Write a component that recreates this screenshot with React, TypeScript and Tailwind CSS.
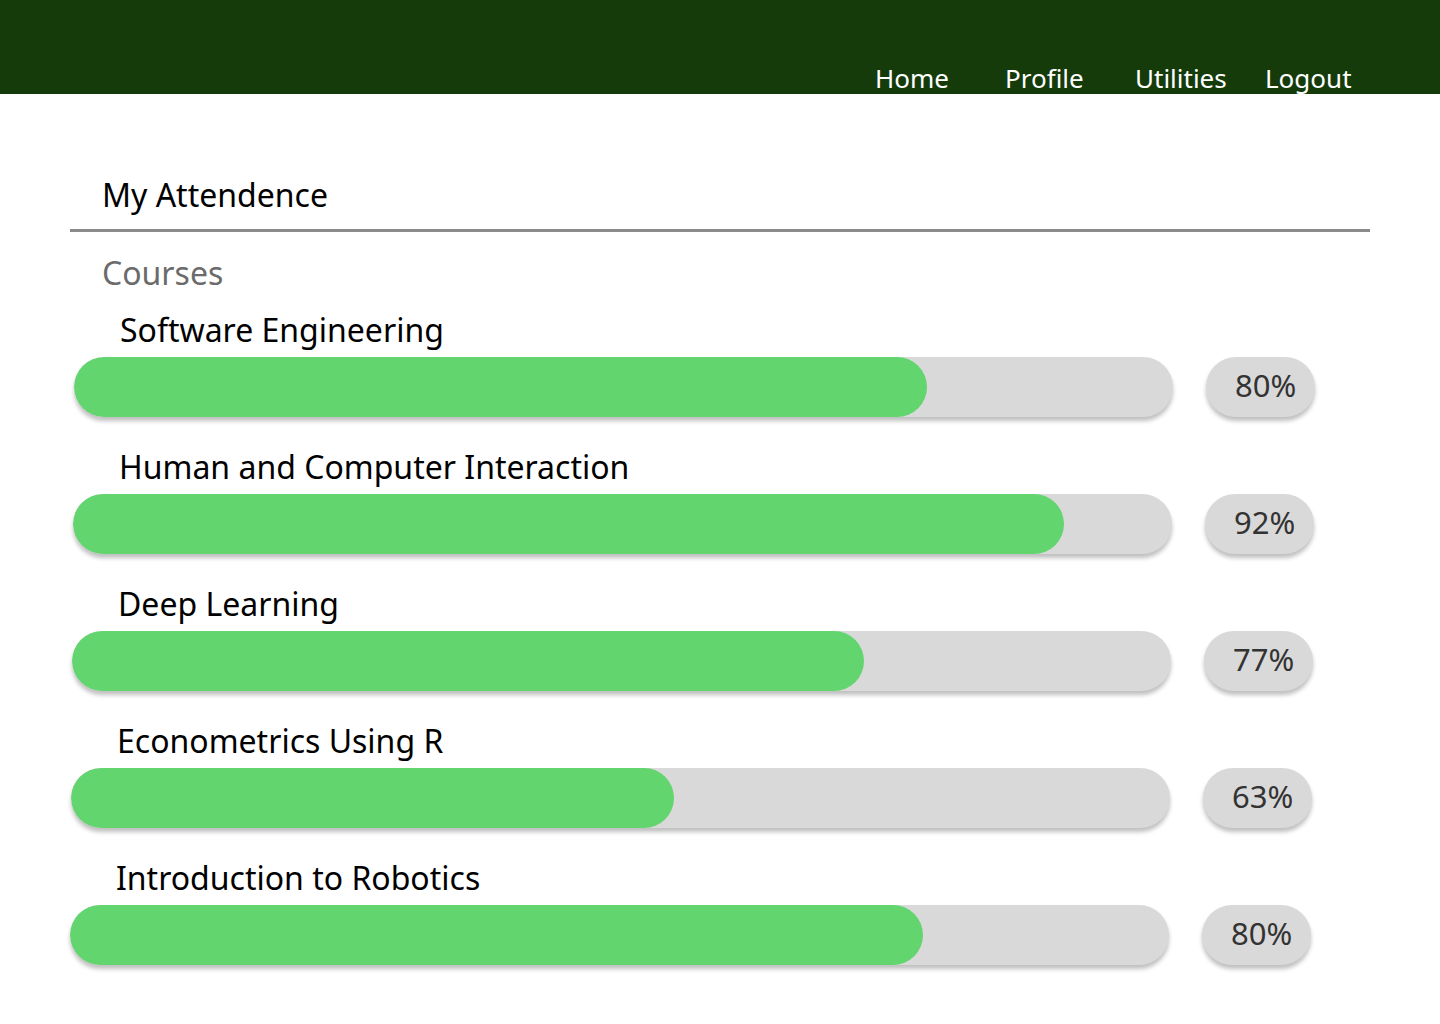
const courses = [
  { name: "Software Engineering", fill: "w-[853px]", pct: "80%", shift: "ml-[4px]" },
  { name: "Human and Computer Interaction", fill: "w-[991px]", pct: "92%", shift: "ml-[3px]" },
  { name: "Deep Learning", fill: "w-[792px]", pct: "77%", shift: "ml-[2px]" },
  { name: "Econometrics Using R", fill: "w-[603px]", pct: "63%", shift: "ml-[1px]" },
  { name: "Introduction to Robotics", fill: "w-[853px]", pct: "80%", shift: "ml-0" },
];

const links = ["Home", "Profile", "Utilities", "Logout"];

export default function App() {
  return (
    <div className="min-h-screen bg-white font-['Noto_Sans',sans-serif] text-black">
      <header className="h-[94px] bg-[#153b0b] flex justify-end pr-[45px] pt-[62px]">
        {links.map((l) => (
          <a key={l} href="#" className="w-[130px] text-[26px] leading-[32px] text-white">
            {l}
          </a>
        ))}
      </header>

      <main className="px-[70px]">
        <div className="mt-[79px] pb-[12px] border-b-[3px] border-[#8a8a8a]">
          <h1 className="pl-[32px] text-[32px] leading-[44px]">My Attendence</h1>
        </div>

        <h2 className="mt-[19px] pl-[32px] text-[32px] leading-[44px] text-[#6b6b6b]">Courses</h2>

        <div className="mt-[13px] flex flex-col gap-[28px]">
          {courses.map((c) => (
            <div key={c.name} className={c.shift}>
              <p className="pl-[46px] text-[32px] leading-[44px] mb-[5px]">{c.name}</p>
              <div className="flex items-center">
                <div className="w-[1099px] h-[60px] rounded-full bg-[#d9d9d9] shadow-[0_4px_4px_rgba(0,0,0,0.25)] overflow-hidden">
                  <div className={`${c.fill} h-full rounded-full bg-[#62d56f]`} />
                </div>
                <div className="ml-[33px] w-[109px] h-[60px] rounded-full bg-[#d9d9d9] shadow-[0_4px_4px_rgba(0,0,0,0.25)] flex items-center pl-[29px] pb-[3px] text-[31px] text-[#333333]">
                  {c.pct}
                </div>
              </div>
            </div>
          ))}
        </div>
      </main>
    </div>
  );
}
